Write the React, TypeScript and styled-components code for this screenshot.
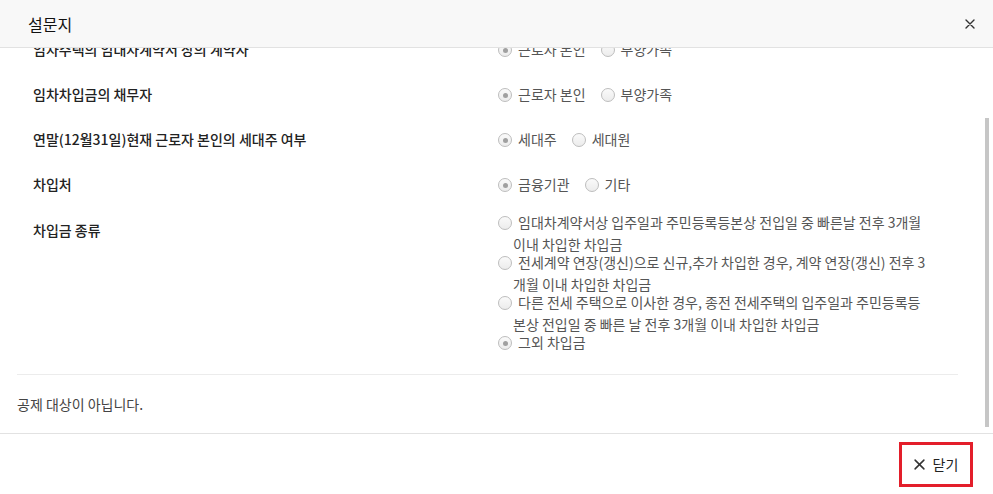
import { useLayoutEffect, useRef, useState } from "react";
import styled, { createGlobalStyle } from "styled-components";

type Question = {
  label: string;
  options: string[];
  checked: number;
  stacked?: boolean;
};

const questions: Question[] = [
  { label: "국민주택규모 이하 주택 여부", options: ["예", "아니오"], checked: 0 },
  { label: "임차주택의 임대차계약서 상의 계약자", options: ["근로자 본인", "부양가족"], checked: 0 },
  { label: "임차차입금의 채무자", options: ["근로자 본인", "부양가족"], checked: 0 },
  { label: "연말(12월31일)현재 근로자 본인의 세대주 여부", options: ["세대주", "세대원"], checked: 0 },
  { label: "차입처", options: ["금융기관", "기타"], checked: 0 },
  {
    label: "차입금 종류",
    options: [
      "임대차계약서상 입주일과 주민등록등본상 전입일 중 빠른날 전후 3개월 이내 차입한 차입금",
      "전세계약 연장(갱신)으로 신규,추가 차입한 경우, 계약 연장(갱신) 전후 3개월 이내 차입한 차입금",
      "다른 전세 주택으로 이사한 경우, 종전 전세주택의 입주일과 주민등록등본상 전입일 중 빠른 날 전후 3개월 이내 차입한 차입금",
      "그외 차입금",
    ],
    checked: 3,
    stacked: true,
  },
];

const CloseIcon = ({ size = 10 }: { size?: number }) => (
  <svg width={size} height={size} viewBox="0 0 10 10">
    <path d="M1 1L9 9M9 1L1 9" stroke="#333" strokeWidth="1.4" strokeLinecap="round" />
  </svg>
);

export default function App() {
  const bodyRef = useRef<HTMLDivElement>(null);
  const [thumb, setThumb] = useState({ top: 0, height: 0 });

  useLayoutEffect(() => {
    const el = bodyRef.current;
    if (!el) return;
    el.scrollTop = el.scrollHeight;
    const track = el.clientHeight - 6;
    setThumb({
      top: (el.scrollTop / el.scrollHeight) * track,
      height: (el.clientHeight / el.scrollHeight) * track,
    });
  }, []);

  return (
    <>
      <GlobalStyle />
      <Dialog>
        <Header>
          <Title>설문지</Title>
          <IconButton aria-label="close">
            <CloseIcon />
          </IconButton>
        </Header>
        <BodyFrame>
          <Body ref={bodyRef}>
            <Table>
              {questions.map((q) => (
                <Row key={q.label} stacked={q.stacked}>
                  <Label>{q.label}</Label>
                  <Options stacked={q.stacked}>
                    {q.options.map((o, i) => (
                      <Option key={o} stacked={q.stacked}>
                        <Radio checked={i === q.checked} />
                        {o}
                      </Option>
                    ))}
                  </Options>
                </Row>
              ))}
            </Table>
            <Divider />
            <Note>공제 대상이 아닙니다.</Note>
          </Body>
          <ScrollThumb style={{ top: thumb.top, height: thumb.height }} />
        </BodyFrame>
        <Footer>
          <CloseButton>
            <CloseIcon size={11} />
            닫기
          </CloseButton>
        </Footer>
      </Dialog>
    </>
  );
}

const GlobalStyle = createGlobalStyle`
  html, body {
    margin: 0;
    padding: 0;
    background: #fff;
  }
  body {
    font-family: "Noto Sans CJK KR", "Noto Sans", sans-serif;
    font-size: 14px;
    color: #333;
  }
`;

const Dialog = styled.div`
  display: flex;
  flex-direction: column;
  height: 100vh;
  background: #fff;
`;

const Header = styled.div`
  height: 47px;
  flex-shrink: 0;
  display: flex;
  align-items: center;
  justify-content: space-between;
  padding: 0 17px 0 28px;
  background: #f8f8f8;
  border-bottom: 1px solid #e2e2e2;
`;

const Title = styled.h1`
  margin: 0;
  font-size: 16px;
  font-weight: 400;
  color: #111;
`;

const IconButton = styled.button`
  border: none;
  background: none;
  padding: 0;
  width: 12px;
  height: 12px;
  display: flex;
  align-items: center;
  justify-content: center;
  cursor: pointer;
`;

const BodyFrame = styled.div`
  flex: 1;
  min-height: 0;
  position: relative;
  display: flex;
`;

const Body = styled.div`
  flex: 1;
  overflow-y: auto;
  padding: 0 35px 0 17px;
  scrollbar-width: none;

  &::-webkit-scrollbar {
    display: none;
  }
`;

const ScrollThumb = styled.div`
  position: absolute;
  right: 4px;
  width: 4px;
  background: #c6c6c6;
`;

const Table = styled.div`
  padding-top: 22px;
`;

const Row = styled.div<{ stacked?: boolean }>`
  display: grid;
  grid-template-columns: 465px 432px;
  align-items: start;
  padding: ${(p) => (p.stacked ? "11px 0 12px 16px" : "10px 0 13px 16px")};
  line-height: 22px;
`;

const Label = styled.div`
  font-weight: 500;
  color: #222;
`;

const Options = styled.div<{ stacked?: boolean }>`
  display: ${(p) => (p.stacked ? "block" : "flex")};
  align-items: flex-start;
  gap: 15px;
  margin-top: ${(p) => (p.stacked ? "-8px" : "0")};
  color: #555;
`;

const Option = styled.label<{ stacked?: boolean }>`
  display: block;
  padding-left: 15px;
  &:not(:first-child) {
    margin-top: ${(p) => (p.stacked ? "-4px" : "0")};
  }
`;

const Radio = styled.span<{ checked?: boolean }>`
  display: inline-block;
  position: relative;
  box-sizing: border-box;
  width: 14px;
  height: 14px;
  margin: 0 6px 0 -15px;
  vertical-align: -2px;
  border: 1px solid #bdbdbd;
  border-radius: 50%;
  background: linear-gradient(#fafafa, #ececec);

  &::after {
    content: "";
    display: ${(p) => (p.checked ? "block" : "none")};
    position: absolute;
    left: 3.5px;
    top: 3.5px;
    width: 5px;
    height: 5px;
    border-radius: 50%;
    background: #a0a0a0;
  }
`;

const Divider = styled.hr`
  margin: 9px 0 0;
  border: none;
  border-top: 1px solid #ececec;
`;

const Note = styled.p`
  margin: 0;
  padding: 18px 0 18px;
  line-height: 22px;
  color: #444;
`;

const Footer = styled.div`
  height: 60px;
  flex-shrink: 0;
  display: flex;
  align-items: center;
  justify-content: flex-end;
  padding: 0 20px;
  border-top: 1px solid #e2e2e2;
`;

const CloseButton = styled.button`
  box-sizing: border-box;
  width: 74px;
  height: 45px;
  display: flex;
  align-items: center;
  justify-content: center;
  gap: 8px;
  border: 3px solid #e31e2a;
  background: #fff;
  font-family: "Noto Sans CJK KR", "Noto Sans", sans-serif;
  font-size: 14px;
  color: #222;
  cursor: pointer;
`;
